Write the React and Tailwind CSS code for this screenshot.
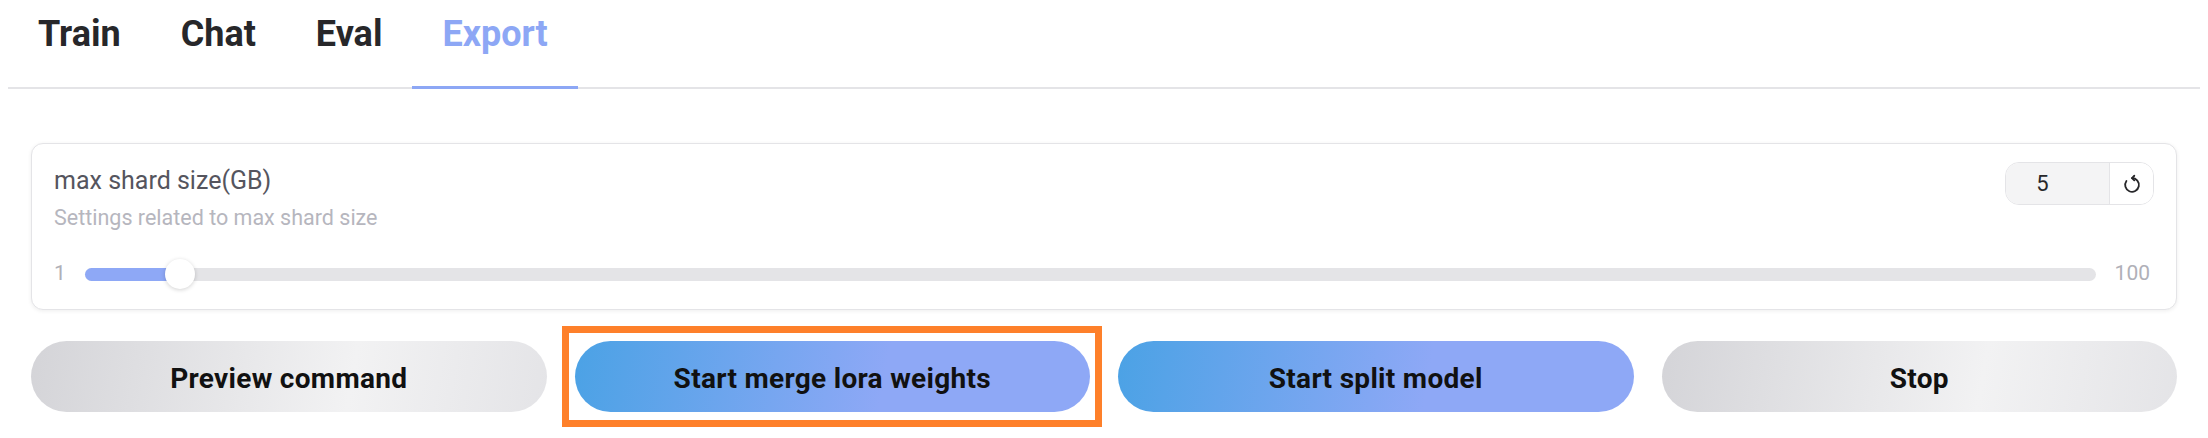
import React, { useState } from "react";

const tabs = ["Train", "Chat", "Eval", "Export"];

// boutons du bas : variant "grey" ou "blue"
const actions = [
  { label: "Preview command", variant: "grey" },
  { label: "Start merge lora weights", variant: "blue", highlight: true },
  { label: "Start split model", variant: "blue" },
  { label: "Stop", variant: "grey" },
];

const btnStyles = {
  grey: "bg-[linear-gradient(100deg,#d4d4d8_0%,#f2f2f3_62%,#e4e4e7_100%)]",
  blue: "bg-[linear-gradient(100deg,#4ba2e5_0%,#8ea8f6_60%,#8ea8f6_100%)]",
};

function ResetIcon() {
  return (
    <svg width="22" height="22" viewBox="0 0 24 24" fill="none" stroke="currentColor" strokeWidth="2" strokeLinecap="round" strokeLinejoin="round">
      <path d="M12 5.5A7.5 7.5 0 1 1 5.9 8.7" />
      <path d="M14.5 3 12 5.5 14.5 8" />
    </svg>
  );
}

export default function App() {
  const [active, setActive] = useState("Export");
  const [value, setValue] = useState(5);
  const min = 1;
  const max = 100;
  const frac = (value - min) / (max - min);

  return (
    <div className="bg-white w-[2208px] h-[438px] px-[8px] font-['Roboto',sans-serif]">
      {/* Tabs */}
      <div className="flex border-b-2 border-[#e4e4e7]">
        {tabs.map((t) => (
          <button
            key={t}
            onClick={() => setActive(t)}
            className={`px-[30px] pt-[12px] pb-[30px] -mb-[2px] border-b-[3px] text-[36px] leading-[44px] font-bold ${
              active === t ? "text-[#8da7f5] border-[#8da7f5]" : "text-[#27272a] border-transparent"
            }`}
          >
            {t}
          </button>
        ))}
      </div>

      <div className="px-[23px] pt-[54px]">
        {/* Slider card */}
        <div className="bg-white border border-[#e4e4e7] rounded-[12px] shadow-[0_1px_4px_rgba(0,0,0,0.07)] px-[22px] pt-[22px] pb-[20px]">
          <div className="flex justify-between items-start">
            <div>
              <div className="text-[25px] leading-[30px] text-[#55555e]">max shard size(GB)</div>
              <div className="mt-[8px] text-[21.5px] leading-[28px] text-[#b6b6be]">Settings related to max shard size</div>
            </div>
            <div className="-mt-[4px] flex h-[43px] w-[149px] border border-[#e4e4e7] rounded-[14px] overflow-hidden">
              <div className="w-[103px] bg-[#f4f4f5] flex items-center justify-center pr-[30px] text-[22px] text-[#27272a]">{value}</div>
              <button onClick={() => setValue(5)} className="flex-1 border-l border-[#e4e4e7] bg-white flex items-center justify-center text-[#27272a]">
                <ResetIcon />
              </button>
            </div>
          </div>

          <div className="mt-[27px] h-[30px] flex items-center gap-[19px] pr-[4px]">
            <span className="text-[21px] text-[#b0b0b8]">1</span>
            <div className="relative flex-1 h-[13px] rounded-full bg-[#e4e4e7]">
              <div className="absolute left-0 top-0 h-full rounded-full bg-[#8ea8f6]" style={{ width: `calc(${frac} * (100% - 30px) + 15px)` }} />
              <div
                className="absolute top-1/2 -translate-y-1/2 w-[30px] h-[30px] rounded-full bg-white shadow-[0_1px_4px_rgba(0,0,0,0.18)]"
                style={{ left: `calc(${frac} * (100% - 30px))` }}
              />
            </div>
            <span className="text-[21px] text-[#b0b0b8]">100</span>
          </div>
        </div>

        {/* Buttons */}
        <div className="mt-[31px] grid grid-cols-4 gap-[28px]">
          {actions.map((a) => (
            <div key={a.label} className="relative">
              <button className={`w-full h-[71px] pt-[5px] rounded-full ${btnStyles[a.variant]} text-[28px] tracking-[0.3px] font-bold text-[#111111]`}>
                {a.label}
              </button>
              {a.highlight && (
                <div className="absolute -left-[13px] -right-[12px] -top-[15px] -bottom-[15px] border-[7px] border-[#fe802a] pointer-events-none" />
              )}
            </div>
          ))}
        </div>
      </div>
    </div>
  );
}
